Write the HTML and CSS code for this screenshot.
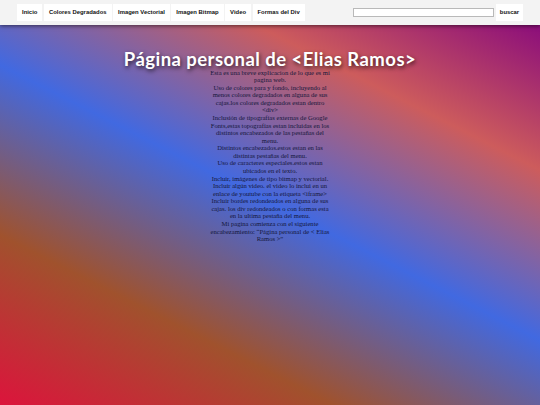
FILE: index.html
```html
<!DOCTYPE html>
<html lang="es">
<head>
<meta charset="utf-8">
<title>Página personal de Elias Ramos</title>
<link rel="stylesheet" href="styles.css">
</head>
<body>
<nav class="menu">
  <ul class="tabs">
    <li><a href="#">Inicio</a></li>
    <li><a href="#">Colores Degradados</a></li>
    <li><a href="#">Imagen Vectorial</a></li>
    <li><a href="#">Imagen Bitmap</a></li>
    <li><a href="#">Video</a></li>
    <li><a href="#">Formas del Div</a></li>
  </ul>
  <form class="search">
    <input class="search-input" type="text">
    <button class="search-btn" type="button">buscar</button>
  </form>
</nav>
<main class="content">
  <h1 class="title">Página personal de &lt;Elias Ramos&gt;</h1>
  <p class="intro">Esta es una breve explicacion de lo que es mi pagina web.<br>Uso de colores para y fondo, incluyendo al menos colores degradados en alguna de sus cajas.los colores degradados estan dentro &lt;div&gt;<br>Inclusión de tipografías externas de Google Fonts,estas topografías estan incluidas en los distintos encabezados de las pestañas del menu.<br>Distintos encabezados.estos estan en las distintas pestañas del menu.<br>Uso de caracteres especiales.estos estan ubicados en el texto.<br>Incluir, imágenes de tipo bitmap y vectorial.<br>Incluir algún video. el video lo inclui en un enlace de youtube con la etiqueta &lt;iframe&gt;<br>Incluir bordes redondeados en alguna de sus cajas. los div redondeados o con formas esta en la ultima pestaña del menu.<br>Mi pagina comienza con el siguiente encabezamiento: “Página personal de &lt; Elias Ramos &gt;”</p>
</main>
</body>
</html>
```
FILE: styles.css
```css
html {
  height: 100%;
  background: linear-gradient(27deg, #dc143c 0%, #a0522d 25%, #4169e1 50%, #cd5c5c 75%, #800080 100%);
}
body {
  margin: 0;
}
.menu {
  display: flex;
  align-items: center;
  justify-content: space-between;
  height: 24.5px;
  padding: 0 17px;
  background: #f3f3f3;
  box-shadow: 0 1px 4px rgba(0, 0, 0, 0.55);
  position: relative;
  font-family: "Liberation Sans", Arial, sans-serif;
}
.tabs {
  display: flex;
  gap: 1.5px;
  list-style: none;
  margin: 0;
  padding: 0;
}
.tabs a {
  display: block;
  padding: 5px 5px;
  background: #ffffff;
  color: #111;
  font-weight: bold;
  font-size: 5.9px;
  line-height: 7px;
  text-decoration: none;
}
.search {
  display: flex;
  align-items: center;
  gap: 2px;
  margin: 0;
}
.search-input {
  box-sizing: border-box;
  width: 141px;
  height: 9px;
  margin: 0;
  padding: 0;
  border: 1px solid #b9b9b9;
  background: #fff;
}
.search-btn {
  box-sizing: border-box;
  width: 27px;
  height: 17px;
  margin: 0;
  padding: 0;
  border: none;
  background: #fff;
  color: #111;
  font-family: "Liberation Sans", Arial, sans-serif;
  font-weight: bold;
  font-size: 5.9px;
}
.content {
  padding-top: 24px;
  text-align: center;
}
.title {
  margin: 0;
  font-family: Lato, "Noto Sans", sans-serif;
  font-weight: 700;
  font-size: 18.5px;
  line-height: 20px;
  letter-spacing: 0.45px;
  color: #fff;
  text-shadow: 1px 2px 4px rgba(0, 0, 0, 0.7);
}
.intro {
  width: 125px;
  margin: 0 auto;
  font-family: "Liberation Serif", "Times New Roman", serif;
  font-size: 6.6px;
  line-height: 7.58px;
  color: #14163a;
}
```
